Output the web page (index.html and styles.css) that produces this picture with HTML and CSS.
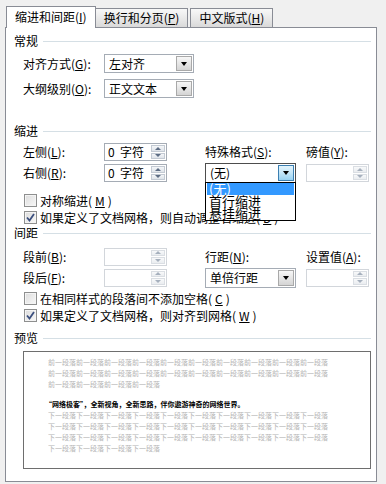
FILE: index.html
```html
<!DOCTYPE html>
<html lang="en">
	<head>
		<meta charset="utf-8" />
		<title>段落</title>
		<link rel="stylesheet" href="styles.css">
	</head>
	<body>
		<div class="dialog">
			<div class="tabs">
				<div class="tab -active">缩进和间距(<u>I</u>)</div>
				<div class="tab">换行和分页(<u>P</u>)</div>
				<div class="tab">中文版式(<u>H</u>)</div>
			</div>

			<div class="panel">
				<div class="group-title"><span>常规</span></div>
				<div class="grid general">
					<span class="label">对齐方式(<u>G</u>):</span>
					<div class="select w90">左对齐<span class="drop-btn"><i class="tri-down"></i></span></div>
					<span class="label">大纲级别(<u>O</u>):</span>
					<div class="select w90">正文文本<span class="drop-btn"><i class="tri-down"></i></span></div>
				</div>

				<div class="group-title gap-indent"><span>缩进</span></div>
				<div class="grid four indent">
					<span class="label">左侧(<u>L</u>):</span>
					<div class="spin"><span class="val">0  字符</span><span class="spin-btns"><b><i class="tri-up"></i></b><b><i class="tri-dn"></i></b></span></div>
					<span class="label">特殊格式(<u>S</u>):</span>
					<span class="label">磅值(<u>Y</u>):</span>

					<span class="label">右侧(<u>R</u>):</span>
					<div class="spin"><span class="val">0  字符</span><span class="spin-btns"><b><i class="tri-up"></i></b><b><i class="tri-dn"></i></b></span></div>
					<div class="select w91 -focus">(无)<span class="drop-btn"><i class="tri-down"></i></span>
						<ul class="droplist">
							<li class="-hot">(无)</li>
							<li>首行缩进</li>
							<li>悬挂缩进</li>
						</ul>
					</div>
					<div class="spin w64 -off"><span class="val"></span><span class="spin-btns"><b><i class="tri-up"></i></b><b><i class="tri-dn"></i></b></span></div>
				</div>
				<div class="checks after-indent">
					<div class="check-row"><span class="box"></span>对称缩进(<u>M</u>)</div>
					<div class="check-row"><span class="box -on"><svg width="9" height="9" viewBox="0 0 9 9"><path d="M1 4.5 L3.5 7.5 L8 1" fill="none" stroke="#3b4f7e" stroke-width="1.8"/></svg></span>如果定义了文档网格，则自动调整右缩进(<u>D</u>)</div>
				</div>

				<div class="group-title"><span>间距</span></div>
				<div class="grid four spacing">
					<span class="label">段前(<u>B</u>):</span>
					<div class="spin -off"><span class="val"></span><span class="spin-btns"><b><i class="tri-up"></i></b><b><i class="tri-dn"></i></b></span></div>
					<span class="label">行距(<u>N</u>):</span>
					<span class="label">设置值(<u>A</u>):</span>

					<span class="label">段后(<u>F</u>):</span>
					<div class="spin -off"><span class="val"></span><span class="spin-btns"><b><i class="tri-up"></i></b><b><i class="tri-dn"></i></b></span></div>
					<div class="select w91">单倍行距<span class="drop-btn"><i class="tri-down"></i></span></div>
					<div class="spin w64 -off"><span class="val"></span><span class="spin-btns"><b><i class="tri-up"></i></b><b><i class="tri-dn"></i></b></span></div>
				</div>
				<div class="checks after-spacing">
					<div class="check-row"><span class="box"></span>在相同样式的段落间不添加空格(<u>C</u>)</div>
					<div class="check-row"><span class="box -on"><svg width="9" height="9" viewBox="0 0 9 9"><path d="M1 4.5 L3.5 7.5 L8 1" fill="none" stroke="#3b4f7e" stroke-width="1.8"/></svg></span>如果定义了文档网格，则对齐到网格(<u>W</u>)</div>
				</div>

				<div class="group-title gap-preview"><span>预览</span></div>
				<div class="preview">
					<p class="ghost">前一段落前一段落前一段落前一段落前一段落前一段落前一段落前一段落前一段落前一段落</p>
					<p class="ghost">前一段落前一段落前一段落前一段落前一段落前一段落前一段落前一段落前一段落前一段落</p>
					<p class="ghost">前一段落前一段落前一段落前一段落</p>
					<p class="sample">“网络极客”，全新视角，全新思路，伴你遨游神奇的网络世界。</p>
					<p class="ghost">下一段落下一段落下一段落下一段落下一段落下一段落下一段落下一段落下一段落下一段落</p>
					<p class="ghost">下一段落下一段落下一段落下一段落下一段落下一段落下一段落下一段落下一段落下一段落</p>
					<p class="ghost">下一段落下一段落下一段落下一段落下一段落下一段落下一段落下一段落下一段落下一段落</p>
					<p class="ghost">下一段落下一段落下一段落下一段落</p>
				</div>
			</div>
		</div>
	</body>
</html>
```

FILE: styles.css
```css
html,
body {
	margin: 0;
	width: 386px;
	height: 484px;
	overflow: hidden;
	background-color: #f0f0f0;
}

body {
	color: #000;
	font: 12px/14px "Noto Sans CJK SC", sans-serif;
}

u {
	text-decoration: underline;
}

.dialog {
	padding: 6px 0 0 5px;
}

/* tabs */

.tabs {
	display: flex;
	align-items: flex-end;
	height: 21px;
	padding-left: 1px;
}

.tab {
	height: 18px;
	line-height: 18px;
	padding: 0 8px;
	margin-left: -1px;
	border: 1px solid #898c95;
	border-bottom: none;
	background: linear-gradient(#f8f8f8, #e8e8e8 55%, #d9d9d9);
	white-space: nowrap;
}

.tab.-active {
	position: relative;
	z-index: 1;
	height: 21px;
	line-height: 20px;
	margin: 0 -1px -1px 0;
	background: #fff;
}

.tab.-active + .tab {
	margin-left: 0;
}

.tab:last-child {
	margin-left: 2px;
}

.panel {
	box-sizing: border-box;
	width: 372px;
	height: 455px;
	padding: 6px 5px 0 8px;
	border: 1px solid #898c95;
	background-color: #fff;
}

/* group titles */

.group-title {
	display: flex;
	align-items: center;
	height: 14px;
}

.group-title::after {
	content: "";
	flex: 1;
	height: 1px;
	margin-left: 5px;
	background-color: #d5dfe5;
}

.gap-indent {
	margin-top: 26px;
}

.gap-preview {
	margin-top: 7px;
}

/* field grids */

.grid {
	display: grid;
	align-items: center;
	padding-left: 9px;
}

.general {
	grid-template-columns: 81px 90px;
	grid-auto-rows: 19px;
	row-gap: 6px;
	margin-top: 6px;
}

.four {
	grid-template-columns: 81px 101px 101px 64px;
}

.indent {
	grid-template-rows: 18px 20px;
	row-gap: 2px;
	margin-top: 5px;
}

.spacing {
	grid-template-rows: 17px 19px;
	row-gap: 3px;
	margin-top: 8px;
}

.label {
	white-space: nowrap;
}

/* select */

.select {
	position: relative;
	box-sizing: border-box;
	display: flex;
	align-items: center;
	height: 19px;
	padding-left: 4px;
	border: 1px solid #a5acb5;
	background-color: #fff;
	white-space: nowrap;
}

.w90 {
	width: 90px;
}

.w91 {
	width: 91px;
	height: 20px;
}

.w64 {
	width: 64px;
}

.drop-btn {
	box-sizing: border-box;
	display: flex;
	align-items: center;
	justify-content: center;
	width: 16px;
	height: 15px;
	margin: 0 1px 0 auto;
	border: 1px solid #a9a9a9;
	background: linear-gradient(#f7f7f7, #e6e6e6 50%, #d4d4d4);
}

.w91 .drop-btn {
	height: 16px;
}

.select.-focus {
	border-color: #4d4d4d;
}

.select.-focus .drop-btn {
	border-color: #3c7fb1;
	background: linear-gradient(#e3f4fc, #c4e6f8 50%, #98d2f2);
}

.tri-down {
	width: 0;
	height: 0;
	border-left: 3px solid transparent;
	border-right: 3px solid transparent;
	border-top: 4px solid #000;
}

.droplist {
	position: absolute;
	top: 18px;
	left: -1px;
	z-index: 2;
	box-sizing: border-box;
	width: 91px;
	margin: 0;
	padding: 0 1px 1px;
	border: 1px solid #000;
	background-color: #fff;
	list-style: none;
	font-size: 13px;
	line-height: 12px;
}

.droplist li {
	height: 12px;
	padding-left: 2px;
}

.droplist li.-hot {
	color: #fff;
	background-color: #3399ff;
}

/* spin box */

.spin {
	box-sizing: border-box;
	display: flex;
	align-items: center;
	width: 63px;
	height: 18px;
	border: 1px solid #a5acb5;
	background-color: #fff;
}

.spin .val {
	flex: 1;
	padding-left: 3px;
	white-space: pre;
}

.spin-btns {
	display: flex;
	flex-direction: column;
	gap: 1px;
	width: 14px;
	height: 14px;
	margin-right: 1px;
}

.spin-btns b {
	box-sizing: border-box;
	display: flex;
	align-items: center;
	justify-content: center;
	flex: 1;
	border: 1px solid #c3cad3;
	background: linear-gradient(#f4f6f8, #dfe4ea);
}

.tri-up,
.tri-dn {
	width: 0;
	height: 0;
	border-left: 3px solid transparent;
	border-right: 3px solid transparent;
}

.tri-up {
	border-bottom: 3px solid #5d6d84;
}

.tri-dn {
	border-top: 3px solid #5d6d84;
}

.spin.-off {
	border-color: #d2d6db;
}

.spin.-off .spin-btns b {
	border-color: #dadee3;
	background: linear-gradient(#f8f9fa, #eaedf0);
}

.spin.-off .tri-up {
	border-bottom-color: #a6b0bd;
}

.spin.-off .tri-dn {
	border-top-color: #a6b0bd;
}

/* checkboxes */

.checks {
	padding-left: 10px;
}

.after-indent {
	margin-top: 9px;
}

.after-spacing {
	margin-top: 3px;
}

.check-row {
	display: flex;
	align-items: center;
	gap: 3px;
	height: 17px;
	white-space: nowrap;
}

.box {
	box-sizing: border-box;
	display: flex;
	align-items: center;
	justify-content: center;
	width: 13px;
	height: 13px;
	border: 1px solid #8e8f8f;
	background: linear-gradient(135deg, #dcdcdc, #f8f8f8);
	box-shadow: inset 0 0 0 1px #f4f4f4;
}

/* preview */

.preview {
	box-sizing: border-box;
	height: 118px;
	margin: 6px 0 0 9px;
	padding: 5px 0 0 24px;
	border: 1px solid #6e6e6e;
	background-color: #fff;
	font-size: 7px;
	line-height: 11px;
	white-space: nowrap;
	overflow: hidden;
}

.preview p {
	width: 280px;
	margin: 0;
	overflow: hidden;
}

.ghost {
	color: #b4b4b4;
}

.sample {
	margin: 9px 0 0 -3px !important;
	color: #000;
	font-weight: bold;
}
```
